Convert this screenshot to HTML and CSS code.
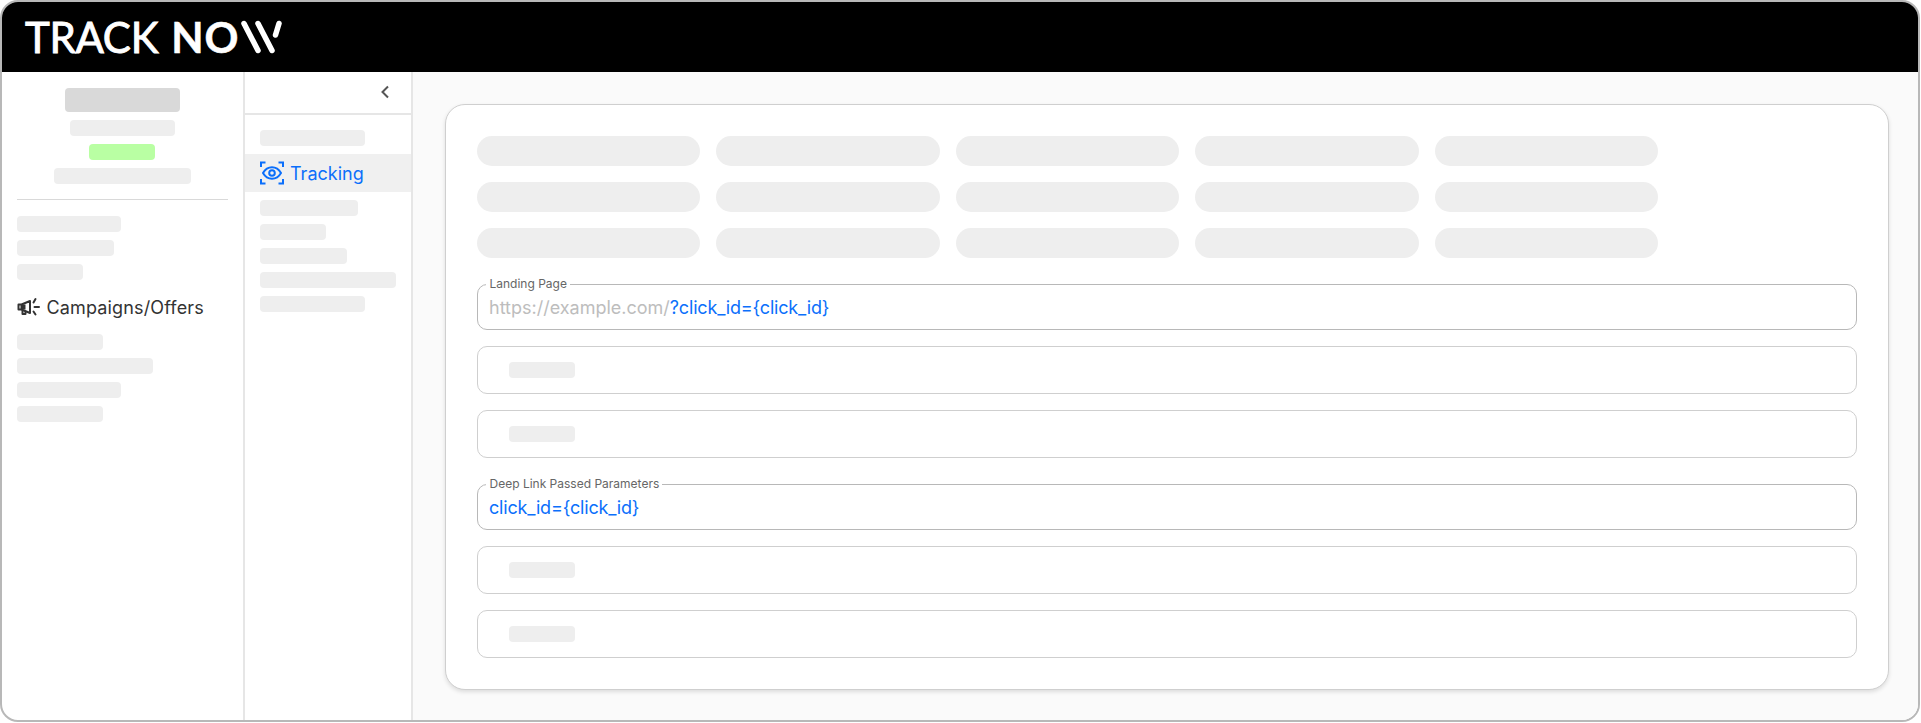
FILE: index.html
```html
<!DOCTYPE html>
<html lang="en">
<head>
<meta charset="utf-8">
<title>Track Now</title>
<link rel="stylesheet" href="styles.css">
</head>
<body>
<div class="frame">
  <header class="topbar">
    <div class="logo"><span class="logo-light">TRACK</span><span class="logo-bold">NO</span><svg class="logo-w" width="42" height="34" viewBox="0 0 42 34" fill="none" stroke="#fff" stroke-width="5.500" stroke-linecap="round"><path d="M3 3.500 17 30.500M17 3.500 31 30.500M34.500 15 38 3.500"/></svg></div>
  </header>
  <div class="body">
    <aside class="side-main">
      <div class="account">
        <div class="sk sk-title"></div>
        <div class="sk sk-105"></div>
        <div class="sk sk-green"></div>
        <div class="sk sk-137"></div>
      </div>
      <hr class="rule">
      <div class="stack">
        <div class="sk sk-104"></div>
        <div class="sk sk-97"></div>
        <div class="sk sk-66"></div>
      </div>
      <div class="nav-title">
        <svg width="23" height="20" viewBox="0 0 23 20" fill="none" stroke="#333" stroke-width="2"><path d="M1.500 7.500h3v5h-3zM4.500 7.500 13 4v12l-8.500-3.500" stroke-linejoin="round"/><path d="M5.500 13v4h3v-3" stroke-linejoin="round"/><path d="M4.500 7.500h4v5h-4z" fill="#333" stroke="none"/><path d="M16.500 5.500 18.500 2M17.500 10h4.500M16.500 14.500l2 3" stroke-linecap="round"/></svg>
        <span>Campaigns/Offers</span>
      </div>
      <div class="stack">
        <div class="sk sk-86"></div>
        <div class="sk sk-136"></div>
        <div class="sk sk-104"></div>
        <div class="sk sk-86"></div>
      </div>
    </aside>
    <aside class="side-sub">
      <div class="sub-head">
        <svg width="10" height="14" viewBox="0 0 10 14" fill="none" stroke="#555" stroke-width="2"><path d="M8 1.500 2.500 7 8 12.500"/></svg>
      </div>
      <div class="sub-list">
        <div class="sk sk-105 inset"></div>
        <div class="sub-active">
          <svg width="24" height="24" viewBox="0 0 24 24" fill="none" stroke="#0b6ffb" stroke-width="2"><path d="M1 6V1.500h4.500M18.500 1.500H23V6M23 18v4.500h-4.500M5.500 22.500H1V18"/><path d="M3 12c2.200-3.800 5.400-5.700 9-5.700s6.800 1.900 9 5.700c-2.200 3.800-5.400 5.700-9 5.700S5.200 15.800 3 12Z"/><circle cx="12" cy="12" r="2.800"/></svg>
          <span>Tracking</span>
        </div>
        <div class="sk sk-98 inset"></div>
        <div class="sk sk-66 inset"></div>
        <div class="sk sk-87 inset"></div>
        <div class="sk sk-136 inset"></div>
        <div class="sk sk-105 inset"></div>
      </div>
    </aside>
    <main class="content">
      <section class="card">
        <div class="pills">
          <div class="pill"></div><div class="pill"></div><div class="pill"></div><div class="pill"></div><div class="pill"></div>
          <div class="pill"></div><div class="pill"></div><div class="pill"></div><div class="pill"></div><div class="pill"></div>
          <div class="pill"></div><div class="pill"></div><div class="pill"></div><div class="pill"></div><div class="pill"></div>
        </div>
        <div class="field field-labelled">
          <span class="field-label">Landing Page</span>
          <span class="muted">https://example.com/</span><span class="link">?click_id={click_id}</span>
        </div>
        <div class="field field-empty"><div class="sk sk-66"></div></div>
        <div class="field field-empty"><div class="sk sk-66"></div></div>
        <div class="field field-labelled">
          <span class="field-label">Deep Link Passed Parameters</span>
          <span class="link">click_id={click_id}</span>
        </div>
        <div class="field field-empty"><div class="sk sk-66"></div></div>
        <div class="field field-empty"><div class="sk sk-66"></div></div>
      </section>
    </main>
  </div>
</div>
</body>
</html>
```
FILE: styles.css
```css
* { box-sizing: border-box; }
html, body { margin: 0; padding: 0; background: #fff; }
body { font-family: Inter, "Liberation Sans", sans-serif; height: 723px; overflow: hidden; }

.frame {
  width: 1920px;
  height: 722px;
  border: 2px solid #b8b8b8;
  border-radius: 18px;
  overflow: hidden;
  display: flex;
  flex-direction: column;
  background: #fff;
}

.topbar {
  height: 70px;
  background: #000;
  display: flex;
  align-items: center;
  padding-left: 23px;
  flex: none;
}
.logo { display: flex; align-items: center; color: #fff; font-family: Lato, sans-serif; font-size: 42px; line-height: 1; margin-top: -1px; }
.logo-light { font-weight: 400; margin-right: 13px; letter-spacing: -0.3px; -webkit-text-stroke: .9px #fff; }
.logo-bold { font-weight: 700; letter-spacing: 1px; -webkit-text-stroke: .5px #fff; }
.logo-w { margin-left: 2px; flex: none; }

.body { flex: 1; display: flex; min-height: 0; }

.sk { height: 16px; background: #eee; border-radius: 4px; flex: none; }
.sk-title { width: 115px; height: 24px; background: #d9d9d9; }
.sk-green { width: 66px; background: #b9ffa3; }
.sk-66 { width: 66px; }
.sk-86 { width: 86px; }
.sk-87 { width: 87px; }
.sk-97 { width: 97px; }
.sk-98 { width: 98px; }
.sk-104 { width: 104px; }
.sk-105 { width: 105px; }
.sk-136 { width: 136px; }
.sk-137 { width: 137px; }

.side-main {
  width: 243px;
  border-right: 2px solid #e6e6e6;
  padding: 16px 15px 0 14.500px;
  flex: none;
}
.account { display: flex; flex-direction: column; align-items: center; gap: 8px; }
.rule { border: 0; border-top: 1px solid #d9d9d9; margin: 15px 0 16px; }
.stack { display: flex; flex-direction: column; gap: 8px; }
.nav-title {
  display: flex;
  align-items: center;
  gap: 7px;
  margin: 14px 0;
  height: 26px;
  font-size: 18px;
  letter-spacing: .15px;
  color: #333;
}

.side-sub {
  width: 168px;
  border-right: 2px solid #e6e6e6;
  flex: none;
}
.sub-head {
  height: 43px;
  border-bottom: 2px solid #e6e6e6;
  display: flex;
  align-items: center;
  justify-content: flex-end;
  padding: 0 21px 2px 0;
}
.sub-list { padding-top: 15px; display: flex; flex-direction: column; gap: 8px; }
.inset { margin-left: 15px; }
.sub-active {
  height: 38px;
  background: #f0f0f0;
  display: flex;
  align-items: center;
  gap: 6px;
  padding-left: 15px;
  font-size: 18px;
  color: #0b6ffb;
}

.content { flex: 1; background: #fafafa; padding: 32px 29px 0 31.500px; min-width: 0; }
.card {
  background: #fff;
  border: 1px solid #cfcfcf;
  border-radius: 20px;
  box-shadow: 0 2px 4px rgba(0, 0, 0, .12);
  padding: 31px;
}
.pills { display: grid; grid-template-columns: repeat(5, 223.500px); column-gap: 16px; row-gap: 16px; }
.pill { height: 30px; border-radius: 15px; background: #eee; }

.field {
  position: relative;
  border-radius: 10px;
  display: flex;
  align-items: center;
  background: #fff;
}
.field-labelled {
  height: 46px;
  margin: 26px 0 16px;
  border: 1px solid #b8b8b8;
  padding: 1px 11.500px 0;
  font-size: 18px;
  line-height: 24px;
}
.field-empty {
  height: 48px;
  margin-bottom: 16px;
  border: 1px solid #cfcfcf;
  padding: 0 31px;
}
.field-empty:last-child { margin-bottom: 0; }
.field-label {
  position: absolute;
  left: 8px;
  top: -8px;
  padding: 0 3px 0 4px;
  background: #fff;
  font-size: 12px;
  line-height: 14px;
  color: #666;
}
.muted { color: #bdbdbd; }
.link { color: #0b6ffb; letter-spacing: -.18px; }
```
